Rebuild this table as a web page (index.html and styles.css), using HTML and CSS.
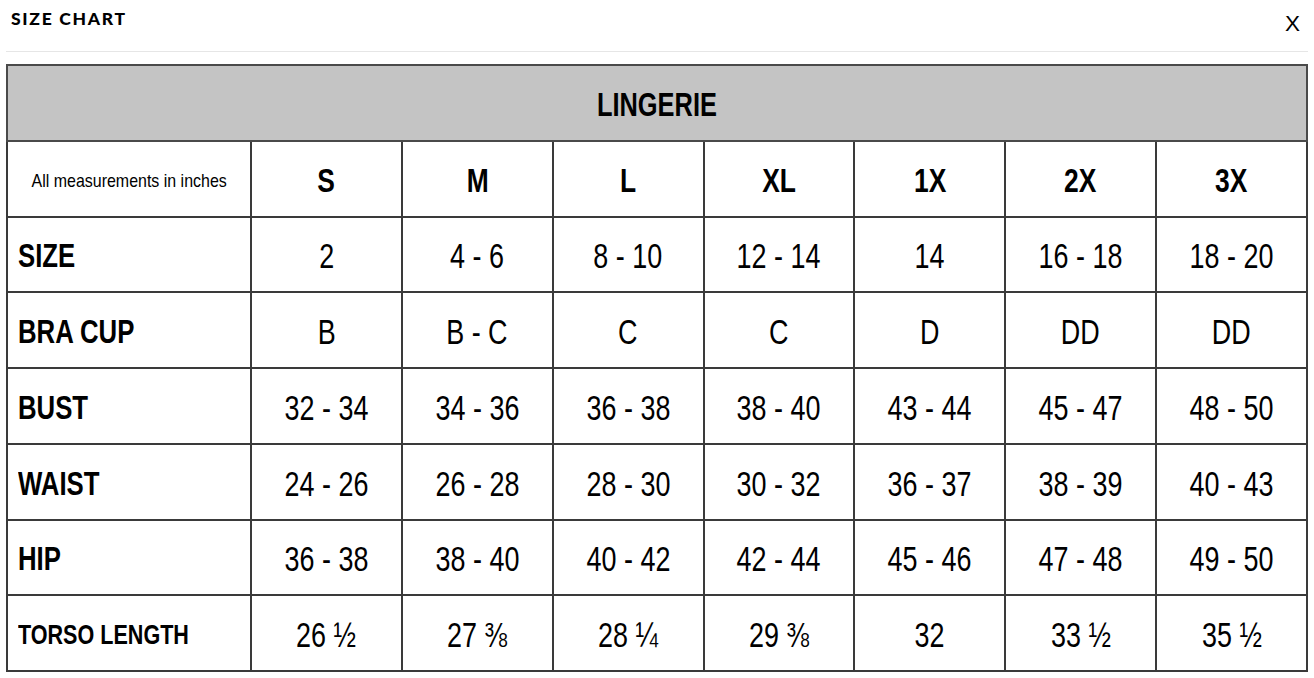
FILE: index.html
```html
<!DOCTYPE html>
<html lang="en">
<head>
<meta charset="utf-8">
<title>Size Chart</title>
<link rel="stylesheet" href="styles.css">
</head>
<body>
<div class="modal">
  <div class="modal-header">
    <h2 class="modal-title">SIZE CHART</h2>
    <button class="close-btn" type="button">X</button>
  </div>
  <div class="modal-body">
    <table class="chart">
      <colgroup>
        <col class="col-label">
        <col><col><col><col><col><col><col>
      </colgroup>
      <thead>
        <tr><th class="title" colspan="8"><span class="t">LINGERIE</span></th></tr>
      </thead>
      <tbody>
        <tr class="sizes">
          <td class="note"><span class="t">All measurements in inches</span></td>
          <th><span class="t">S</span></th><th><span class="t">M</span></th><th><span class="t">L</span></th><th><span class="t">XL</span></th><th><span class="t">1X</span></th><th><span class="t">2X</span></th><th><span class="t">3X</span></th>
        </tr>
        <tr>
          <th class="label"><span class="t">SIZE</span></th>
          <td><span class="t">2</span></td><td><span class="t">4 - 6</span></td><td><span class="t">8 - 10</span></td><td><span class="t">12 - 14</span></td><td><span class="t">14</span></td><td><span class="t">16 - 18</span></td><td><span class="t">18 - 20</span></td>
        </tr>
        <tr>
          <th class="label"><span class="t">BRA CUP</span></th>
          <td><span class="t">B</span></td><td><span class="t">B - C</span></td><td><span class="t">C</span></td><td><span class="t">C</span></td><td><span class="t">D</span></td><td><span class="t">DD</span></td><td><span class="t">DD</span></td>
        </tr>
        <tr>
          <th class="label"><span class="t">BUST</span></th>
          <td><span class="t">32 - 34</span></td><td><span class="t">34 - 36</span></td><td><span class="t">36 - 38</span></td><td><span class="t">38 - 40</span></td><td><span class="t">43 - 44</span></td><td><span class="t">45 - 47</span></td><td><span class="t">48 - 50</span></td>
        </tr>
        <tr>
          <th class="label"><span class="t">WAIST</span></th>
          <td><span class="t">24 - 26</span></td><td><span class="t">26 - 28</span></td><td><span class="t">28 - 30</span></td><td><span class="t">30 - 32</span></td><td><span class="t">36 - 37</span></td><td><span class="t">38 - 39</span></td><td><span class="t">40 - 43</span></td>
        </tr>
        <tr>
          <th class="label"><span class="t">HIP</span></th>
          <td><span class="t">36 - 38</span></td><td><span class="t">38 - 40</span></td><td><span class="t">40 - 42</span></td><td><span class="t">42 - 44</span></td><td><span class="t">45 - 46</span></td><td><span class="t">47 - 48</span></td><td><span class="t">49 - 50</span></td>
        </tr>
        <tr>
          <th class="label small"><span class="t">TORSO LENGTH</span></th>
          <td><span class="t">26 ½</span></td><td><span class="t">27 ⅜</span></td><td><span class="t">28 ¼</span></td><td><span class="t">29 ⅜</span></td><td><span class="t">32</span></td><td><span class="t">33 ½</span></td><td><span class="t">35 ½</span></td>
        </tr>
      </tbody>
    </table>
  </div>
</div>
</body>
</html>
```
FILE: styles.css
```css
html, body {
  margin: 0;
  padding: 0;
  background: #ffffff;
}

.modal {
  padding: 0 6px;
  color: #000;
}

.modal-header {
  display: flex;
  justify-content: space-between;
  align-items: flex-start;
  height: 52px;
  border-bottom: 1px solid #e6e6e6;
  box-sizing: border-box;
}

.modal-title {
  margin: 0;
  padding: 9px 0 0 5px;
  font-family: "Lato", "DejaVu Sans", sans-serif;
  font-weight: 900;
  font-size: 17.5px;
  letter-spacing: 1.7px;
  line-height: 20px;
  color: #000;
}

.close-btn {
  margin: 11px 8px 0 0;
  padding: 0;
  border: 0;
  background: transparent;
  font-family: "Liberation Sans", Arial, sans-serif;
  font-size: 22.5px;
  line-height: 26px;
  color: #000;
  cursor: pointer;
}

.modal-body {
  padding-top: 12px;
}

.chart {
  width: 1302px;
  border-collapse: collapse;
  table-layout: fixed;
  border: 2px solid #4a4a4a;
  font-family: "Liberation Sans", Arial, sans-serif;
  color: #000;
}

.col-label {
  width: 244px;
}

.chart th,
.chart td {
  border: 2px solid #3a3a3a;
  height: 69.75px;
  padding: 4px 0 0;
  text-align: center;
  vertical-align: middle;
  white-space: nowrap;
}

.t {
  display: inline-block;
  transform: scaleX(0.78);
  transform-origin: center;
}

.chart td {
  font-size: 35px;
  font-weight: 400;
}

.chart td .t {
  transform: scaleX(0.77);
}

.chart th {
  font-size: 33px;
  font-weight: 700;
}

.chart .sizes th .t {
  transform: scaleX(0.8);
}

.chart .title {
  background: #c4c4c4;
  font-size: 33px;
  border-color: #4a4a4a;
}

.chart .title .t {
  transform: scaleX(0.77);
}

.chart .note {
  font-size: 19px;
}

.chart .note .t {
  transform: scaleX(0.84);
}

.chart .label {
  text-align: left;
  padding-left: 10px;
}

.chart .label .t {
  transform: scaleX(0.78);
  transform-origin: left center;
}

.chart .label.small {
  font-size: 28px;
}

.chart .label.small .t {
  transform: scaleX(0.77);
}
```
